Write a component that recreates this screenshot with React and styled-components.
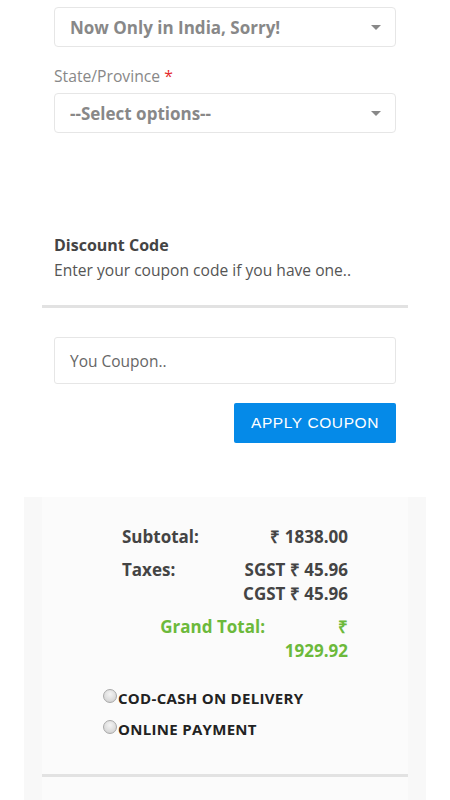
import styled, { createGlobalStyle } from "styled-components";

const Global = createGlobalStyle`
  body {
    margin: 0;
    background: #fff;
    font-family: "Open Sans", "Liberation Sans", sans-serif;
  }
  * { box-sizing: border-box; }
`;

const Page = styled.div`
  width: 450px;
  padding-top: 7px;
`;

const Section = styled.div`
  padding: 0 42px;
`;

const Inner = styled.div`
  padding: 0 12px;
`;

const Select = styled.div`
  height: 40px;
  border: 1px solid #e6e6e6;
  border-radius: 4px;
  background: #fff;
  display: flex;
  align-items: center;
  justify-content: space-between;
  padding: 0 15px;
  font-size: 17px;
  font-weight: 700;
  color: #888;
`;

const Caret = styled.span`
  width: 0;
  height: 0;
  border-left: 5px solid transparent;
  border-right: 5px solid transparent;
  border-top: 5px solid #888;
  margin-right: -1px;
`;

const Label = styled.div`
  font-size: 15.7px;
  color: #888;
  margin: 19px 0 7px;
  line-height: 20px;
  span { color: #e52b2b; }
`;

const Heading = styled.div`
  margin-top: 101px;
  font-size: 16px;
  font-weight: 700;
  color: #444;
  line-height: 22px;
`;

const Sub = styled.div`
  font-size: 15.6px;
  color: #555;
  line-height: 22px;
  margin-top: 3px;
`;

const Rule = styled.div`
  height: 3px;
  background: #e2e2e2;
  margin: ${(p) => p.$m || "0"};
`;

const Input = styled.div`
  height: 47px;
  border: 1px solid #e6e6e6;
  border-radius: 3px;
  display: flex;
  align-items: center;
  padding: 0 15px;
  font-size: 15.5px;
  color: #666;
`;

const Actions = styled.div`
  display: flex;
  justify-content: flex-end;
  margin-top: 19px;
`;

const Button = styled.button`
  width: 162px;
  height: 40px;
  border: none;
  border-radius: 2px;
  background: #058ae8;
  color: #fff;
  font-family: "Liberation Sans", sans-serif;
  font-size: 15.5px;
  letter-spacing: 0.6px;
  padding: 0;
`;

const Panel = styled.div`
  margin: 54px 24px 0;
  background: #f8f8f8;
  padding: 0 18px;
  height: 304px;
`;

const PanelInner = styled.div`
  background: #fbfbfb;
  padding-top: 28px;
  height: 100%;
`;

const Summary = styled.div`
  margin-left: 80px;
  width: 226px;
  font-size: 17px;
  font-weight: 700;
  color: #444;
  line-height: 24px;
`;

const Row = styled.div`
  display: flex;
  justify-content: space-between;
  margin-bottom: 9px;
`;

const Values = styled.div`
  text-align: right;
`;

const GrandRow = styled.div`
  display: flex;
  justify-content: flex-end;
  gap: 17px;
  color: #6cb93b;
`;

const GrandValue = styled.div`
  width: 66px;
  text-align: right;
`;

const Payments = styled.div`
  margin: 19px 0 0 61px;
`;

const Option = styled.label`
  display: flex;
  align-items: center;
  font-size: 15px;
  font-weight: 700;
  color: #222;
  letter-spacing: 0.3px;
  height: 31px;
`;

const Radio = styled.span`
  width: 14px;
  height: 14px;
  border-radius: 50%;
  border: 1px solid #a9a9a9;
  background: radial-gradient(circle at 50% 35%, #f4f4f4 0%, #d8d8d8 70%, #c4c4c4 100%);
  margin-right: 1px;
  transform: translateY(-2px);
`;

export default function App() {
  return (
    <>
      <Global />
      <Page>
        <Section>
          <Inner>
            <Select>
              Now Only in India, Sorry!
              <Caret />
            </Select>
            <Label>
              State/Province <span>*</span>
            </Label>
            <Select>
              --Select options--
              <Caret />
            </Select>
            <Heading>Discount Code</Heading>
            <Sub>Enter your coupon code if you have one..</Sub>
          </Inner>
          <Rule $m="24px 0 29px" />
          <Inner>
            <Input>You Coupon..</Input>
            <Actions>
              <Button>APPLY COUPON</Button>
            </Actions>
          </Inner>
        </Section>
        <Panel>
          <PanelInner>
            <Summary>
              <Row>
                <span>Subtotal:</span>
                <span>₹ 1838.00</span>
              </Row>
              <Row>
                <span>Taxes:</span>
                <Values>
                  SGST ₹ 45.96
                  <br />
                  CGST ₹ 45.96
                </Values>
              </Row>
              <GrandRow>
                <span>Grand Total:</span>
                <GrandValue>₹ 1929.92</GrandValue>
              </GrandRow>
            </Summary>
            <Payments>
              <Option>
                <Radio />
                COD-CASH ON DELIVERY
              </Option>
              <Option>
                <Radio />
                ONLINE PAYMENT
              </Option>
            </Payments>
            <Rule $m="30px 0 0" />
          </PanelInner>
        </Panel>
      </Page>
    </>
  );
}
